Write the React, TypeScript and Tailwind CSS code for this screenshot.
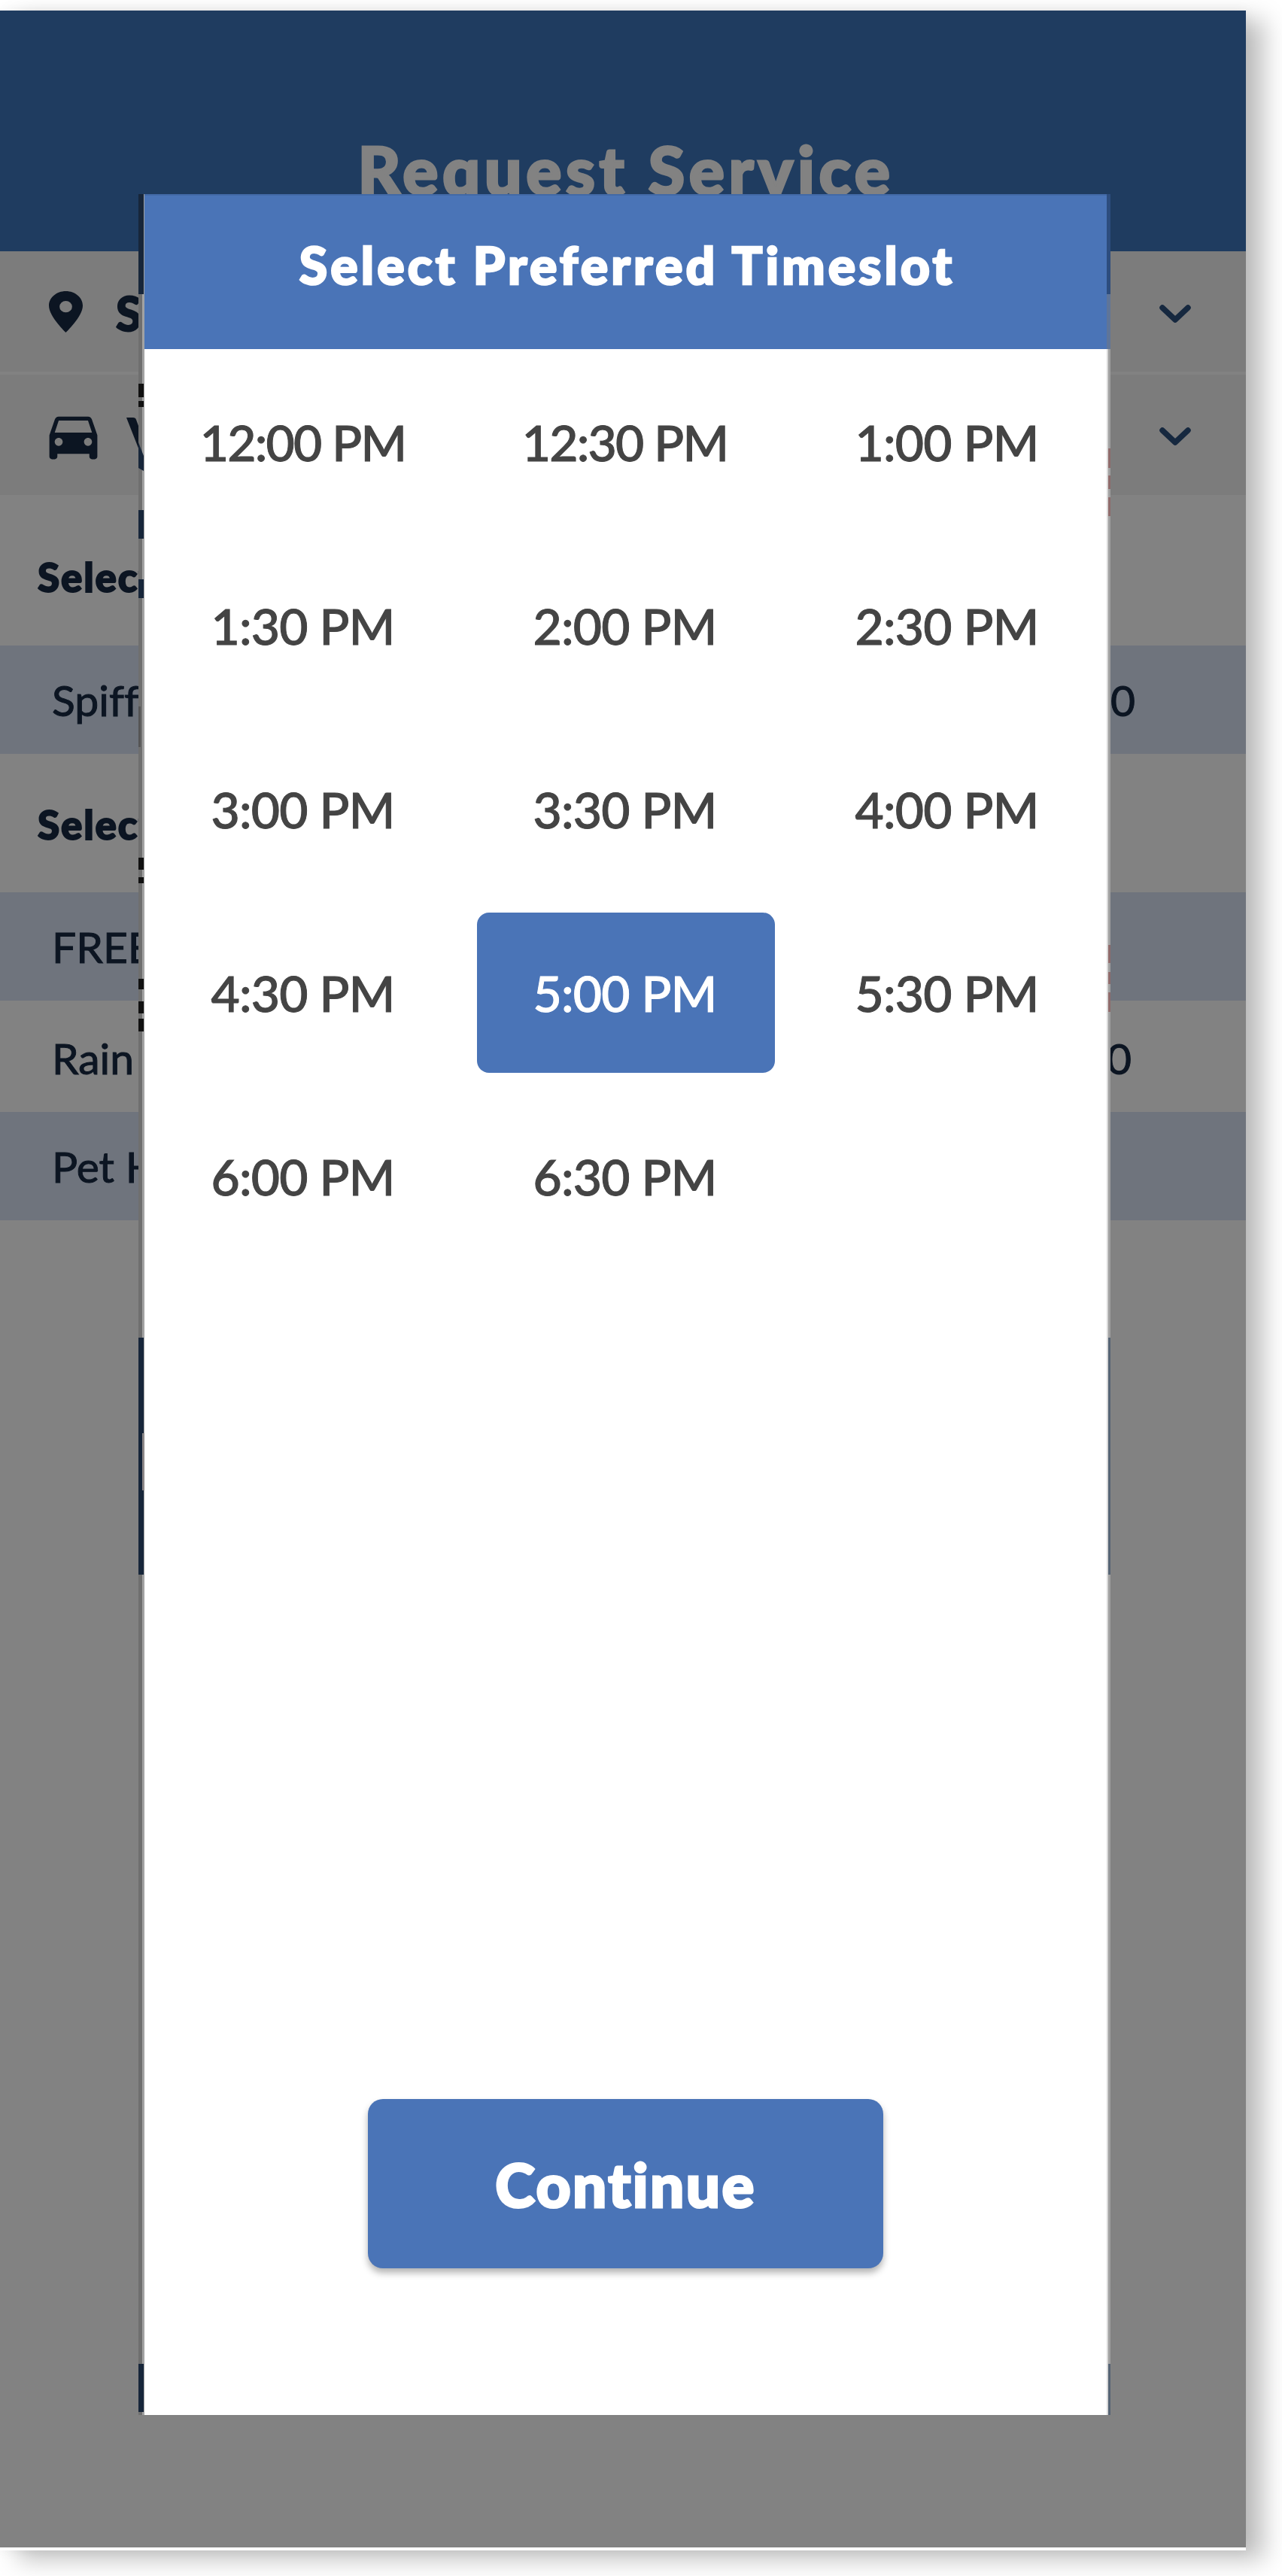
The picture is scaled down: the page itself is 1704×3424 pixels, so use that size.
import { useState } from "react";
import clsx from "clsx";
import { MdDirectionsCar } from "react-icons/md";

const slots = [
  "12:00 PM", "12:30 PM", "1:00 PM",
  "1:30 PM", "2:00 PM", "2:30 PM",
  "3:00 PM", "3:30 PM", "4:00 PM",
  "4:30 PM", "5:00 PM", "5:30 PM",
  "6:00 PM", "6:30 PM",
];

function Pin() {
  return (
    <svg className="h-[55px] w-[45px]" viewBox="5 2 14 20" preserveAspectRatio="none" fill="currentColor">
      <path d="M12 2C8.13 2 5 5.13 5 9c0 5.25 7 13 7 13s7-7.75 7-13c0-3.87-3.13-7-7-7zm0 10.3a2.6 2.8 0 0 1 0-5.6 2.6 2.8 0 0 1 0 5.6z" />
    </svg>
  );
}

function Chevron() {
  return (
    <svg className="h-6 w-[42px] text-[#16283f]" viewBox="0 0 42 24" fill="none" stroke="currentColor" strokeWidth="7.5" strokeLinecap="round" strokeLinejoin="round">
      <path d="M4 4l17 16L38 4" />
    </svg>
  );
}

interface ServiceRowProps {
  name: string;
  price?: string;
  className?: string;
}

function ServiceRow({ name, price, className }: ServiceRowProps) {
  return (
    <div className={clsx("flex items-center justify-between pl-[69px] text-[57px] leading-none [-webkit-text-stroke:1px_currentColor]", className)}>
      <span>{name}</span>
      <span>{price}</span>
    </div>
  );
}

// slivers of the screen behind the dialog that show along its sides
function LeftEdge() {
  return (
    <svg className="w-2 shrink-0 bg-[#6f6f6f]" viewBox="0 0 8 2952" preserveAspectRatio="none">
      <rect x="5" width="3" height="2952" fill="#a2a2a2" />
      <g fill="#111111">
        <rect y="252" width="7" height="18" />
        <rect y="275" width="7" height="8" />
        <rect y="882" width="7" height="16" />
        <rect y="908" width="7" height="8" />
        <rect y="1043" width="7" height="14" />
        <rect y="1073" width="7" height="16" />
        <rect y="1096" width="7" height="17" />
      </g>
      <g fill="#17263a">
        <rect width="7" height="133" />
        <path d="M0 330l7 18v20L0 364z" />
        <rect y="420" width="7" height="38" />
        <rect y="512" width="7" height="25" />
        <rect y="1520" width="7" height="315" />
        <rect y="2884" width="7" height="64" />
      </g>
      <rect x="5" y="1647" width="3" height="76" fill="#8c8787" />
      <rect y="681" width="3" height="54" fill="#555555" />
    </svg>
  );
}

function RightEdge() {
  return (
    <svg className="w-[5px] shrink-0 bg-[#a0a0a0]" viewBox="0 0 5 2952" preserveAspectRatio="none">
      <rect width="2" height="2952" fill="#d8d8d8" />
      <rect width="5" height="133" fill="#2d4d7e" />
      <rect width="5" y="133" height="73" fill="#5f7599" />
      <g fill="#8f6b6b">
        <rect x="2" y="338" width="3" height="26" />
        <rect x="2" y="374" width="3" height="18" />
        <rect x="2" y="403" width="3" height="25" />
        <rect x="2" y="998" width="3" height="24" />
        <rect x="2" y="1034" width="3" height="16" />
        <rect x="2" y="1061" width="3" height="26" />
      </g>
      <rect x="2" y="1520" width="3" height="315" fill="#566474" />
      <rect x="2" y="2884" width="3" height="68" fill="#566474" />
    </svg>
  );
}

export default function App() {
  const [selected, setSelected] = useState("5:00 PM");

  return (
    <div className="h-[3424px] w-[1704px] overflow-hidden bg-white pt-3.5 font-['Lato','Open_Sans',sans-serif] [font-variant-ligatures:none]">
      <div className="relative h-[3376px] w-[1656px] border-b-4 border-white bg-[#828282] text-[#0c1522] shadow-[24px_12px_30px_rgba(0,0,0,0.25),0_0_16px_rgba(0,0,0,0.06)]">
        <header className="flex h-80 justify-center bg-[#1f3c60] pt-[167px] pl-2">
          <h1 className="text-[88px] leading-none font-black tracking-[5.6px] text-[#828282] [-webkit-text-stroke:3px_currentColor]">Request Service</h1>
        </header>

        {/* Location and vehicle */}
        <div className="flex h-40 items-center bg-[#7c7c7c] pr-[73px] pl-[65px]">
          <Pin />
          <span className="ml-[44px] pt-1 text-[62px] leading-none font-black [-webkit-text-stroke:2px_currentColor]">S</span>
          <span className="ml-auto pt-1.5"><Chevron /></span>
        </div>
        <div className="mt-1 flex h-40 items-center bg-[#7c7c7c] pr-[73px] pl-[55px]">
          <MdDirectionsCar className="size-[85px]" />
          <span className="ml-[30px] text-[62px] leading-none font-black [-webkit-text-stroke:2px_currentColor]">V</span>
          <span className="ml-auto pt-1"><Chevron /></span>
        </div>

        <h2 className="flex h-[200px] items-center pt-4 pl-[50px] text-[53px] leading-none font-black tracking-[1.8px] [-webkit-text-stroke:2px_currentColor]">Select</h2>
        <ServiceRow name="Spiff" price="0" className="h-36 bg-[#6f747d] pr-[147px]" />
        <h2 className="flex h-[184px] items-center pt-0.5 pl-[50px] text-[53px] leading-none font-black tracking-[1.8px] [-webkit-text-stroke:2px_currentColor]">Select</h2>
        <ServiceRow name="FREE" className="h-36 bg-[#6f747d]" />
        <ServiceRow name="Rain" price="0" className="h-[148px] pt-1 pr-[152px]" />
        <ServiceRow name="Pet H" className="h-36 bg-[#6f747d]" />

        {/* Timeslot dialog */}
        <div role="dialog" className="absolute top-[244px] left-[184px] flex h-[2952px] w-[1292px]">
          <LeftEdge />
          <div className="flex flex-1 flex-col bg-white">
            <div className="flex h-[206px] justify-center border-t-2 border-[#4269a6] bg-[#4a74b7] pt-[58px] pl-1">
              <h2 className="text-[68px] leading-none font-black tracking-[4.1px] whitespace-nowrap text-white [-webkit-text-stroke:2.5px_currentColor]">Select Preferred Timeslot</h2>
            </div>
            <div className="grid grid-cols-[repeat(3,396px)] justify-center gap-x-8 gap-y-[31px] pt-[17px]">
              {slots.map((slot) => (
                <button
                  key={slot}
                  onClick={() => setSelected(slot)}
                  className={clsx(
                    "flex h-[213px] items-center justify-center rounded-2xl pt-px pr-0.5 text-[66px] leading-none font-medium [-webkit-text-stroke:1px_currentColor]",
                    slot.length > 7 ? "tracking-[-1.8px]" : "tracking-[-0.8px]",
                    slot === selected ? "bg-[#4a74b7] text-white" : "text-[#444444]"
                  )}
                >
                  {slot}
                </button>
              ))}
            </div>
            <button className="mx-auto mt-auto mb-[195px] h-[225px] w-[685px] rounded-[20px] bg-[#4a74b7] text-[80px] leading-none font-black tracking-[2.4px] text-white shadow-[0_6px_10px_rgba(0,0,0,0.3)] [-webkit-text-stroke:3px_currentColor]">
              Continue
            </button>
          </div>
          <RightEdge />
        </div>
      </div>
    </div>
  );
}
